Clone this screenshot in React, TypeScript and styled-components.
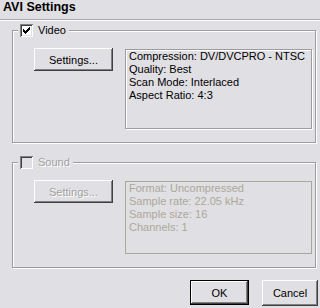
import React from 'react';
import styled, { createGlobalStyle } from 'styled-components';

const face = '#e0dfe3';
const disabled = '#aca899';

const GlobalStyle = createGlobalStyle`
  html, body {
    margin: 0;
    padding: 0;
    background: ${face};
  }
  body {
    width: 320px;
    height: 308px;
    overflow: hidden;
    font-family: "Liberation Sans", Arial, sans-serif;
    font-size: 11px;
    color: #000;
  }
`;

const Dialog = styled.div`
  display: flex;
  flex-direction: column;
  width: 320px;
  height: 308px;
`;

const TitleBar = styled.div`
  height: 19px;
  padding-left: 3px;
  font-size: 12.5px;
  font-weight: bold;
  line-height: 15px;
  border-bottom: 1px solid #a6a6b6;
  box-shadow: 0 1px #fff;
`;

const Body = styled.div`
  display: flex;
  flex-direction: column;
  padding: 4px 4px 0 12px;
`;

const Group = styled.fieldset<{ $gap?: number }>`
  margin: ${(p) => p.$gap ?? 0}px 0 0 0;
  padding: 0;
  min-width: 0;
  border: 1px solid #9d9da1;
  box-shadow: inset 1px 1px #fff, 1px 1px #fff;
`;

const Legend = styled.legend<{ $off?: boolean }>`
  display: flex;
  align-items: center;
  gap: 5px;
  height: 13px;
  margin-left: 5px;
  padding: 0 3px 0 2px;
  background: ${face};
  line-height: 13px;
  color: ${(p) => (p.$off ? '#a0a0a0' : '#000')};
  text-shadow: ${(p) => (p.$off ? '1px 1px #fff' : 'none')};
`;

const Box = styled.span<{ $off?: boolean }>`
  display: inline-flex;
  align-items: center;
  justify-content: center;
  width: 13px;
  height: 13px;
  box-sizing: border-box;
  background: ${(p) => (p.$off ? face : '#fff')};
  box-shadow: inset 1px 1px #808080, inset -1px -1px #fff,
    inset 2px 2px #404040, inset -2px -2px ${face};
`;

const GroupRow = styled.div`
  display: flex;
  align-items: flex-start;
  gap: 12px;
  padding: 11px 3px 13px 21px;
`;

const Button = styled.button<{ $w: number; $h?: number; $default?: boolean }>`
  width: ${(p) => p.$w}px;
  height: ${(p) => p.$h ?? 23}px;
  box-sizing: border-box;
  margin: 0;
  padding: 0;
  font-family: inherit;
  font-size: 11px;
  color: #000;
  background: ${face};
  border: ${(p) => (p.$default ? '1px solid #000' : 'none')};
  box-shadow: inset -1px -1px #404040, inset 1px 1px #fff,
    inset -2px -2px #808080, inset 2px 2px ${face};

  &:disabled {
    color: #a0a0a0;
    text-shadow: 1px 1px #fff;
  }
`;

const Info = styled.div<{ $h: number; $off?: boolean }>`
  width: 187px;
  height: ${(p) => p.$h}px;
  margin-top: 1px;
  box-sizing: border-box;
  padding: 0 3px;
  line-height: 13px;
  border: 1px solid ${(p) => (p.$off ? disabled : '#9d9da1')};
  box-shadow: ${(p) => (p.$off ? 'none' : 'inset 1px 1px #fff, 1px 1px #fff')};
  color: ${(p) => (p.$off ? disabled : '#000')};
  white-space: nowrap;
`;

const Footer = styled.div`
  display: flex;
  justify-content: flex-end;
  align-items: flex-start;
  gap: 13px;
  margin-top: 12px;
  padding-right: 2px;
`;

const Check = () => (
  <svg width="7" height="7" viewBox="0 0 7 7" shapeRendering="crispEdges">
    <path
      d="M0 2h1v3H0zM1 3h1v3H1zM2 4h1v3H2zM3 3h1v3H3zM4 2h1v3H4zM5 1h1v3H5zM6 0h1v3H6z"
      fill="#000"
    />
  </svg>
);

const video = [
  'Compression: DV/DVCPRO - NTSC',
  'Quality: Best',
  'Scan Mode: Interlaced',
  'Aspect Ratio: 4:3',
];

const sound = [
  'Format: Uncompressed',
  'Sample rate: 22.05 kHz',
  'Sample size: 16',
  'Channels: 1',
];

export default function App() {
  return (
    <Dialog>
      <GlobalStyle />
      <TitleBar>AVI Settings</TitleBar>
      <Body>
        <Group>
          <Legend>
            <Box>
              <Check />
            </Box>
            Video
          </Legend>
          <GroupRow>
            <Button $w={79}>Settings...</Button>
            <Info $h={80}>
              {video.map((l) => (
                <div key={l}>{l}</div>
              ))}
            </Info>
          </GroupRow>
        </Group>
        <Group $gap={13} disabled>
          <Legend $off>
            <Box $off />
            Sound
          </Legend>
          <GroupRow>
            <Button $w={79} disabled>
              Settings...
            </Button>
            <Info $h={73} $off>
              {sound.map((l) => (
                <div key={l}>{l}</div>
              ))}
            </Info>
          </GroupRow>
        </Group>
      </Body>
      <Footer>
        <Button $w={59} $h={25} $default>
          OK
        </Button>
        <Button $w={56} $h={26}>
          Cancel
        </Button>
      </Footer>
    </Dialog>
  );
}
